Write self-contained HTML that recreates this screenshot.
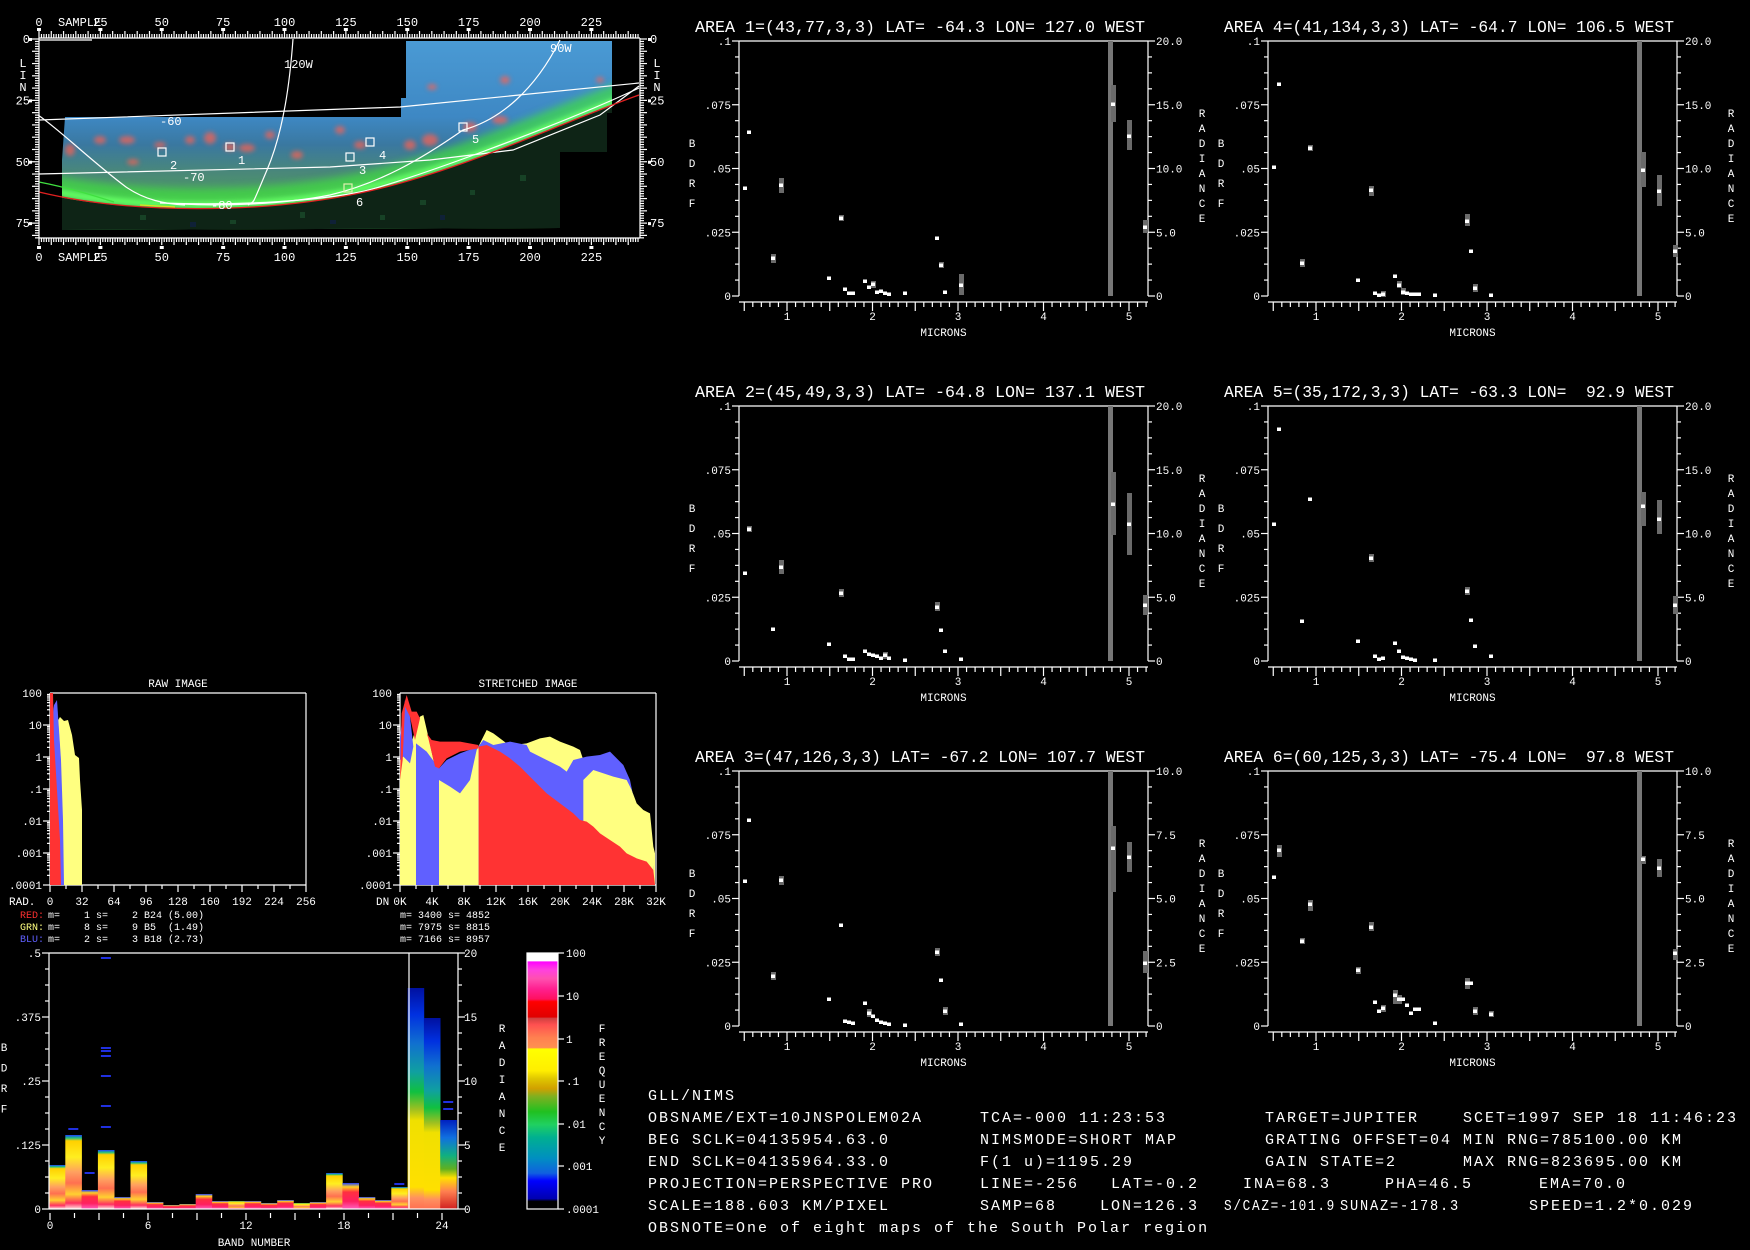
<!DOCTYPE html>
<html><head><meta charset="utf-8">
<style>
html,body{margin:0;padding:0;background:#000;}
svg{display:block}
text{font-family:"Liberation Mono","DejaVu Sans Mono",monospace;fill:#fff}
</style></head>
<body>
<svg id="s" xmlns="http://www.w3.org/2000/svg" width="1750" height="1250" viewBox="0 0 1750 1250">
<defs>
<filter id="bl" x="-20%" y="-50%" width="140%" height="200%"><feGaussianBlur stdDeviation="4"/></filter>
<filter id="bl2" x="-50%" y="-50%" width="200%" height="200%"><feGaussianBlur stdDeviation="2.5"/></filter>
<clipPath id="fp"><polygon points="65,117 401,117 401,98 406,98 406,41 612,41 612,113 607,113 607,152 560,152 560,228 62,230 62,160"/></clipPath>
<linearGradient id="mapg" x1="0" y1="41" x2="0" y2="230" gradientUnits="userSpaceOnUse">
<stop offset="0" stop-color="#4a9ad4"/><stop offset="0.4" stop-color="#3e88c4"/><stop offset="0.55" stop-color="#3a78a0"/><stop offset="0.7" stop-color="#4a8878"/><stop offset="0.85" stop-color="#50a060"/><stop offset="1" stop-color="#40c050"/></linearGradient>
<linearGradient id="gA" x1="0" y1="0" x2="0" y2="1">
<stop offset="0" stop-color="#2040ff"/><stop offset="0.04" stop-color="#20c080"/><stop offset="0.08" stop-color="#ffd000"/><stop offset="0.3" stop-color="#ffee20"/><stop offset="0.5" stop-color="#ffa060"/><stop offset="0.65" stop-color="#ff7050"/><stop offset="0.8" stop-color="#ffd030"/><stop offset="0.92" stop-color="#ff3060"/><stop offset="1" stop-color="#ffe0e0"/></linearGradient>
<linearGradient id="gB" x1="0" y1="0" x2="0" y2="1">
<stop offset="0" stop-color="#2040ff"/><stop offset="0.15" stop-color="#ffd020"/><stop offset="0.35" stop-color="#ff3040"/><stop offset="0.7" stop-color="#ff2060"/><stop offset="1" stop-color="#ff60c0"/></linearGradient>
<linearGradient id="gC" x1="0" y1="0" x2="0" y2="1">
<stop offset="0" stop-color="#0010a0"/><stop offset="0.12" stop-color="#0030e0"/><stop offset="0.25" stop-color="#1070d0"/><stop offset="0.38" stop-color="#10a0a0"/><stop offset="0.47" stop-color="#10c040"/><stop offset="0.55" stop-color="#a0c020"/><stop offset="0.6" stop-color="#f0e000"/><stop offset="0.9" stop-color="#ffe000"/><stop offset="0.95" stop-color="#ff9060"/><stop offset="1" stop-color="#ff7050"/></linearGradient>
<linearGradient id="gD" x1="0" y1="0" x2="0" y2="1">
<stop offset="0" stop-color="#0020c0"/><stop offset="0.2" stop-color="#1070e0"/><stop offset="0.4" stop-color="#10b080"/><stop offset="0.55" stop-color="#60b020"/><stop offset="0.65" stop-color="#ffe000"/><stop offset="0.8" stop-color="#ff8050"/><stop offset="1" stop-color="#d02020"/></linearGradient>
<linearGradient id="cb" x1="0" y1="953" x2="0" y2="1209" gradientUnits="userSpaceOnUse">
<stop offset="0" stop-color="#fff"/><stop offset="0.032" stop-color="#fff"/><stop offset="0.033" stop-color="#ff00ff"/><stop offset="0.065" stop-color="#ff40e0"/><stop offset="0.1" stop-color="#ff50b0"/><stop offset="0.14" stop-color="#ff2090"/><stop offset="0.18" stop-color="#ff1060"/><stop offset="0.19" stop-color="#ff0000"/><stop offset="0.25" stop-color="#e00000"/><stop offset="0.255" stop-color="#d04040"/><stop offset="0.28" stop-color="#ff5050"/><stop offset="0.33" stop-color="#ff8050"/><stop offset="0.37" stop-color="#ff9050"/><stop offset="0.375" stop-color="#ffff00"/><stop offset="0.46" stop-color="#ffee00"/><stop offset="0.49" stop-color="#e0c800"/><stop offset="0.53" stop-color="#d0a000"/><stop offset="0.56" stop-color="#80b020"/><stop offset="0.62" stop-color="#20c020"/><stop offset="0.67" stop-color="#20d060"/><stop offset="0.72" stop-color="#00b090"/><stop offset="0.8" stop-color="#0090c0"/><stop offset="0.86" stop-color="#1060e0"/><stop offset="0.89" stop-color="#0000ff"/><stop offset="0.96" stop-color="#0000b0"/><stop offset="0.97" stop-color="#000000"/><stop offset="1" stop-color="#000000"/></linearGradient>
</defs>

<g clip-path="url(#fp)">
<rect x="60" y="40" width="560" height="195" fill="url(#mapg)"/>
<g filter="url(#bl2)" fill="#ff6050" opacity="0.7">
<ellipse cx="127" cy="140" rx="8" ry="4"/><ellipse cx="100" cy="140" rx="6" ry="4"/><ellipse cx="210" cy="138" rx="6" ry="6"/><ellipse cx="190" cy="140" rx="5" ry="4"/><ellipse cx="297" cy="155" rx="6" ry="4"/><ellipse cx="247" cy="148" rx="8" ry="4"/><ellipse cx="133" cy="162" rx="6" ry="3"/><ellipse cx="70" cy="150" rx="5" ry="6"/><ellipse cx="230" cy="147" rx="6" ry="4"/><ellipse cx="160" cy="145" rx="6" ry="3"/><ellipse cx="430" cy="140" rx="8" ry="6"/><ellipse cx="470" cy="127" rx="7" ry="5"/><ellipse cx="410" cy="145" rx="6" ry="5"/><ellipse cx="500" cy="120" rx="8" ry="4"/><ellipse cx="360" cy="145" rx="6" ry="4"/><ellipse cx="340" cy="130" rx="5" ry="4"/><ellipse cx="505" cy="80" rx="5" ry="4"/><ellipse cx="432" cy="87" rx="5" ry="3"/><ellipse cx="600" cy="80" rx="4" ry="3"/><ellipse cx="270" cy="135" rx="5" ry="4"/></g>
<path d="M39,180 C130,202 260,202 360,181 S560,111 642,83" stroke="#40e040" stroke-width="16" fill="none" filter="url(#bl)" opacity="0.7"/>
<path d="M39,188 C130,210 260,210 360,189 S560,119 642,91" stroke="#60ff60" stroke-width="7" fill="none" filter="url(#bl2)"/>
<path d="M39,193 C130,214 260,214 360,193 S560,123 642,95 L642,240 L39,240 Z" fill="#0e2416"/>
<g fill="#1a4a2a" opacity="0.8"><rect x="140" y="215" width="6" height="5"/><rect x="300" y="212" width="5" height="6"/><rect x="420" y="200" width="6" height="5"/><rect x="470" y="190" width="5" height="5"/><rect x="520" y="175" width="6" height="6"/><rect x="380" y="215" width="5" height="5"/><rect x="230" y="220" width="6" height="4"/></g>
<g fill="#102040" opacity="0.8"><rect x="190" y="222" width="6" height="5"/><rect x="440" y="215" width="5" height="5"/><rect x="330" y="220" width="6" height="4"/></g>
</g>
<g fill="none" stroke="#fff" stroke-width="1.2">
<polyline points="39,120 400,107 639,83"/>
<polyline points="39,174 330,167 430,160 513,150 600,115 639,86"/>
<path d="M160,203 C250,206 320,200 360,192 S560,125 639,88"/>
<path d="M293,39 C290,80 284,130 267,170 S255,200 248,205"/>
<path d="M560,40 C535,90 500,120 463,130 C420,160 380,183 330,195 C280,205 220,206 181,204"/>
<path d="M38,115 C60,130 90,160 126,187 C145,200 165,204 185,205"/>
<line x1="39" y1="40" x2="92" y2="40"/>
</g>
<path d="M39,192 C130,214 260,214 360,193 S560,123 639,95" stroke="#e02020" stroke-width="1.3" fill="none"/>
<path d="M39,182 C70,188 95,196 114,202" stroke="#40e040" stroke-width="1.3" fill="none"/>
<path d="M140,205 L175,207" stroke="#e0e020" stroke-width="1.3" fill="none"/>
<g fill="none" stroke="#fff" stroke-width="1.2">
<rect x="226" y="143" width="8" height="8"/><rect x="158" y="148" width="8" height="8"/><rect x="346" y="153" width="8" height="8"/><rect x="366" y="138" width="8" height="8"/><rect x="459" y="123" width="8" height="8"/><rect x="344" y="184" width="8" height="8" stroke="#e0f0b0"/></g>
<g font-size="12"><text x="238" y="164">1</text><text x="170" y="169">2</text><text x="359" y="174">3</text><text x="379" y="159">4</text><text x="472" y="143">5</text><text x="356" y="206">6</text>
<text x="284" y="68">120W</text><text x="550" y="52">90W</text><text x="160" y="125">-60</text><text x="183" y="181">-70</text><text x="211" y="209">-80</text></g>

<g id="gen"></g>

<g font-size="15" letter-spacing="2" style="white-space:pre">
<text x="648" y="1100">GLL/NIMS</text>
<text x="648" y="1122">OBSNAME/EXT=10JNSPOLEM02A</text><text x="980" y="1122">TCA=-000 11:23:53</text><text x="1265" y="1122">TARGET=JUPITER</text><text x="1463" y="1122">SCET=1997 SEP 18 11:46:23</text>
<text x="648" y="1144">BEG SCLK=04135954.63.0</text><text x="980" y="1144">NIMSMODE=SHORT MAP</text><text x="1265" y="1144">GRATING OFFSET=04</text><text x="1463" y="1144">MIN RNG=785100.00 KM</text>
<text x="648" y="1166">END SCLK=04135964.33.0</text><text x="980" y="1166">F(1 u)=1195.29</text><text x="1265" y="1166">GAIN STATE=2</text><text x="1463" y="1166">MAX RNG=823695.00 KM</text>
<text x="648" y="1188">PROJECTION=PERSPECTIVE PRO</text><text x="980" y="1188">LINE=-256</text><text x="1111" y="1188">LAT=-0.2</text><text x="1243" y="1188">INA=68.3</text><text x="1385" y="1188">PHA=46.5</text><text x="1539" y="1188">EMA=70.0</text>
<text x="648" y="1210">SCALE=188.603 KM/PIXEL</text><text x="980" y="1210">SAMP=68</text><text x="1100" y="1210">LON=126.3</text><text x="1224" y="1210" textLength="112" lengthAdjust="spacingAndGlyphs">S/CAZ=-101.9</text><text x="1340" y="1210" textLength="120" lengthAdjust="spacingAndGlyphs">SUNAZ=-178.3</text><text x="1529" y="1210">SPEED=1.2*0.029</text>
<text x="648" y="1232">OBSNOTE=One of eight maps of the South Polar region</text>
</g>
</svg>
<script>
var g=document.getElementById('gen'),h='';
function L(x1,y1,x2,y2,c){h+='<line x1="'+x1+'" y1="'+y1+'" x2="'+x2+'" y2="'+y2+'" stroke="'+(c||'#fff')+'" stroke-width="1.2"/>';}
function T(x,y,s,fs,a,c,tl){h+='<text x="'+x+'" y="'+y+'" font-size="'+(fs||11)+'"'+(a?' text-anchor="'+a+'"':'')+(c?' style="fill:'+c+'"':'')+(tl?' textLength="'+tl+'" lengthAdjust="spacingAndGlyphs"':'')+' xml:space="preserve">'+s+'</text>';}
function R(x,y,w,hh,c){h+='<rect x="'+x+'" y="'+y+'" width="'+w+'" height="'+hh+'" fill="'+c+'"/>';}
(function(){
 var x0=39,x1=640,y0=38,y1=238,ps=2.455;
 L(x0,y0,x1,y0);L(x0,y1,x1,y1);L(x0,y0,x0,y1);L(x1,y0,x1,y1);
 for(var i=0;i<=245;i++){var x=x0+i*ps;if(x>x1)break;var l=(i%5==0)?7:4;L(x,y0,x,y0-l);L(x,y1,x,y1+l);}
 for(var j=0;j<=81;j++){var y=y0+1+j*ps;if(y>y1)break;var l=(j%5==0)?7:4;L(x0,y,x0-l,y);L(x1,y,x1+l,y);}
 var lab=['0','25','50','75','100','125','150','175','200','225'];
 for(var k=0;k<lab.length;k++){var x=x0+k*25*ps;R(x-2,y0-10,4,3,'#fff');R(x-2,y1+8,4,3,'#fff');T(x,26,lab[k],12,'middle');T(x,261,lab[k],12,'middle');}
 T(58,26,'SAMPLE',12);T(58,261,'SAMPLE',12);
 var ll=['0','25','50','75'];for(var k=0;k<4;k++){var y=y0+1+k*25*ps;T(x0-9,y+4,ll[k],12,'end');T(x1+10,y+4,ll[k],12);R(x0-10,y-1,3,3,'#fff');R(x1+8,y-1,3,3,'#fff');}
 var w='LINE';for(var k=0;k<3;k++){T(23,67+k*12,w[k],12,'middle');T(657,67+k*12,w[k],12,'middle');}
})();
function P(x0,y0,rmax,title,pts){
 var W=409,H=255;
 T(x0-44,y0-9,title,16.6,null,null,450);
 L(x0,y0,x0+W,y0);L(x0,y0,x0,y0+H);L(x0+W,y0,x0+W,y0+H);
 for(var i=0;i<=16;i++){var y=y0+i*H/16,l=(i%4==0)?7:4;L(x0,y,x0-l,y);L(x0+W,y,x0+W+l,y);}
 var ll=['.1','.075','.05','.025','0'];
 var rl=rmax==20?['20.0','15.0','10.0','5.0','0']:['10.0','7.5','5.0','2.5','0'];
 for(var i=0;i<5;i++){var y=y0+i*H/4+4;T(x0-8,y,ll[i],11,'end');T(x0+W+8,y,rl[i],11);}
 var ya=y0+261;L(x0,ya,x0+W,ya);
 for(var m=5;m<=52;m++){var x=x0+48+(m/10-1)*85.5;var l=(m%5==0)?9:5;L(x,ya,x,ya+l);}
 for(var n=1;n<=5;n++){T(x0+48+(n-1)*85.5,y0+279,''+n,11,'middle');}
 T(x0+W/2,y0+295,'MICRONS',11,'middle');
 var b='BDRF';for(var k=0;k<4;k++)T(x0-47,y0+106+k*20,b[k],11,'middle');
 var r='RADIANCE';for(var k=0;k<8;k++)T(x0+W+54,y0+76+k*15,r[k],11,'middle');
 R(x0+369,y0,5,H,'#777');
 for(var k=0;k<pts.length;k++){var p=pts[k];
  if(p.length>2)R(x0+p[0]-2,y0+p[2],5,p[3]-p[2],'#6a6a6a');
  R(x0+p[0]-2,y0+p[1]-1.5,4,3.5,'#fff');}
}
P(739,41,20,'AREA 1=(43,77,3,3) LAT= -64.3 LON= 127.0 WEST',[[6,147],[10,91],[34,217,213,222],[42,144,137,152],[90,237],[102,177,174,180],[106,248],[110,252],[114,252],[126,240],[130,246],[134,243,240,247],[138,251],[142,250],[146,252],[150,253],[166,252],[198,197],[202,224,221,227],[206,251],[222,244,233,254],[374,63,44,81],[390,95,79,109],[406,186,179,192]]);
P(1268,41,20,'AREA 4=(41,134,3,3) LAT= -64.7 LON= 106.5 WEST',[[6,126],[11,43],[34,222,218,226],[42,107,104,110],[90,239],[103,149,145,155],[107,252],[111,254],[115,253,250,256],[127,235],[131,244,240,247],[135,251,247,254],[139,252],[143,253],[147,253],[151,253],[167,254],[199,180,173,185],[203,210],[207,247,243,251],[223,254],[375,129,111,146],[391,150,134,165],[407,210,204,216]]);
P(739,406,20,'AREA 2=(45,49,3,3) LAT= -64.8 LON= 137.1 WEST',[[6,167],[10,123,120,126],[34,223],[42,161,154,168],[90,238],[102,187,183,191],[106,250],[110,253],[114,253],[126,245],[130,248],[134,249],[138,250],[142,252],[146,249,246,253],[150,252],[166,254],[198,201,196,205],[202,224],[206,245],[222,253],[374,98,66,129],[390,118,87,149],[406,199,189,209]]);
P(1268,406,20,'AREA 5=(35,172,3,3) LAT= -63.3 LON=  92.9 WEST',[[11,23],[6,118],[34,215],[42,93],[90,235],[103,152,148,156],[107,250],[111,253],[115,252],[127,237],[131,245],[135,251],[139,252],[143,253],[147,254],[167,254],[199,185,181,189],[203,214],[207,240],[223,250],[375,100,86,120],[391,113,94,128],[407,199,190,208]]);
P(739,771,10,'AREA 3=(47,126,3,3) LAT= -67.2 LON= 107.7 WEST',[[6,110],[10,49],[34,205,201,209],[42,109,105,114],[90,228],[102,154],[106,250],[110,251],[114,252],[126,232],[130,242,238,246],[134,245],[138,249],[142,251],[146,252],[150,253],[166,254],[198,181,177,185],[202,209],[206,240,236,244],[222,253],[374,77,55,121],[390,86,71,101],[406,192,180,202]]);
P(1268,771,10,'AREA 6=(60,125,3,3) LAT= -75.4 LON=  97.8 WEST',[[6,106],[11,79,74,86],[34,170,167,173],[42,133,129,140],[90,199,196,203],[103,156,151,160],[107,231],[111,240],[115,237,234,241],[127,224,219,233],[131,228,224,233],[135,228],[139,234],[143,242],[147,238],[151,238],[167,252],[199,212,207,218],[203,212],[207,240,236,244],[223,243,240,246],[375,88,85,93],[391,97,88,106],[407,182,178,189]]);
function HX(x0,lab,title,axlab){
 var y0=693,y1=885,W=256;
 L(x0,y0,x0+W,y0);L(x0+W,y0,x0+W,y1);L(x0,y0,x0,y1);L(x0,y1,x0+W,y1);
 T(x0+W/2,687,title,11,'middle');
 var yl=['100','10','1','.1','.01','.001','.0001'];
 for(var d=0;d<6;d++){for(var k=1;k<10;k++){var y=y0+d*32+32-Math.log10(k)*32;var l=k==1?7:3;L(x0,y,x0-l,y);}}
 for(var d=0;d<7;d++)T(x0-8,y0+d*32+4,yl[d],11,'end');
 for(var i=0;i<=16;i++){var x=x0+i*16;L(x,y1,x,y1+(i%2==0?7:4));}
 for(var i=0;i<=8;i++)T(x0+i*32,905,lab[i],11,'middle');
 T(x0-(axlab=='DN'?24:41),905,axlab,11);
}
HX(50,['0','32','64','96','128','160','192','224','256'],'RAW IMAGE','RAD.');
HX(400,['0K','4K','8K','12K','16K','20K','24K','28K','32K'],'STRETCHED IMAGE','DN');
h+='<polygon fill="#ffff80" points="53,885 53,730 57,722 60,717 64,721 68,720 72,735 75,755 79,758 80,780 82,810 82,885"/>';
h+='<polygon fill="#6060ff" points="52,885 52,720 54,705 57,700 58,715 61,760 63,820 64,885"/>';
h+='<polygon fill="#ff3333" points="50,885 50,693 53,693 54,740 57,790 60,840 61,885"/>';
h+='<g transform="translate(360,680) scale(0.33333)">';
h+='<polygon fill="#ffff80" points="120,615 120,160 140,240 160,170 180,110 190,105 205,170 225,260 240,300 270,320 300,340 330,300 350,210 380,150 400,160 440,190 460,195 500,190 540,175 570,170 600,185 640,200 660,210 670,240 700,260 760,280 800,300 815,330 830,370 850,390 870,400 880,500 885,520 885,615"/>';
h+='<polygon fill="#6060ff" points="168,615 168,190 200,215 237,265 260,240 300,220 340,205 355,200 370,180 400,195 450,185 500,195 510,215 560,240 600,260 620,275 640,240 680,230 720,225 750,215 790,255 810,300 830,400 860,490 880,560 880,615"/>';
h+='<polygon fill="#6060ff" points="120,240 120,170 135,60 150,110 160,200 150,250 130,230"/>';
h+='<polygon fill="#ffff80" points="237,615 237,300 270,320 300,340 330,300 350,210 356,200 356,615"/>';
h+='<polygon fill="#ffff80" points="670,615 670,300 700,270 760,290 800,300 815,330 830,380 850,400 870,420 880,520 880,615"/>';
h+='<polygon fill="#ff3333" points="356,615 356,200 380,195 420,215 450,235 480,260 500,280 530,310 560,340 600,370 640,400 660,420 680,425 700,440 720,460 750,480 780,500 800,520 830,535 860,545 880,570 885,615"/>';
h+='<polygon fill="#ff3333" points="200,160 215,180 240,185 300,185 355,195 355,205 300,215 260,235 237,265 225,260 205,175"/>';
h+='<polygon fill="#ff3333" points="120,300 125,100 140,45 155,95 170,95 180,115 165,180 150,110 135,80 128,240"/>';
h+='</g>';
T(20,918,'RED:',10,null,'#ff3030');T(20,930,'GRN:',10,null,'#ffff80');T(20,942,'BLU:',10,null,'#6060ff');
T(48,918,'m=    1 s=    2 B24 (5.00)',10);T(48,930,'m=    8 s=    9 B5  (1.49)',10);T(48,942,'m=    2 s=    3 B18 (2.73)',10);
T(400,918,'m= 3400 s= 4852',10);T(400,930,'m= 7975 s= 8815',10);T(400,942,'m= 7166 s= 8957',10);
(function(){
 var x0=49,x1=458,y0=953,y1=1209,bw=16.3;
 var tops=[1165,1135,1190,1150,1197,1161,1202,1205,1204,1194,1201,1201,1201,1203,1200,1203,1202,1173,1183,1197,1200,1187,988,1018,1120];
 var gr=['gA','gA','gB','gA','gB','gA','gB','gB','gB','gB','gB','gA','gB','gB','gB','gA','gB','gA','gB','gB','gB','gA','gC','gC','gD'];
 for(var i=0;i<25;i++){R(x0+i*bw,tops[i],bw+0.3,y1-tops[i],'url(#'+gr[i]+')');}
 var bl=[[3,957],[3,1047],[3,1050],[3,1055],[3,1075],[3,1105],[3,1126],[1,1128],[2,1172],[21,1183],[24,1101],[24,1108]];
 for(var k=0;k<bl.length;k++){var b=bl[k];R(x0+b[0]*bw+3,b[1],10,2,'#2030e0');}
 L(x0,y0,x1,y0);L(x0,y0,x0,y1);L(x1,y0,x1,y1);L(409,y0,409,y1);L(x0,y1,x1,y1);
 for(var i=0;i<=16;i++){var y=y0+i*16,l=(i%4==0)?7:4;L(x0,y,x0-l,y);L(x1,y,x1+l,y);}
 var ll=['.5','.375','.25','.125','0'],rl=['20','15','10','5','0'];
 for(var i=0;i<5;i++){T(x0-8,y0+i*64+4,ll[i],11,'end');T(x1+6,y0+i*64+4,rl[i],11);}
 var ya=y1+4;for(var i=0;i<=16;i++){var x=x0+1+i*24.5;L(x,ya,x,ya+(i%2==0?7:5));}
 var xl=['0','6','12','18','24'];for(var i=0;i<5;i++)T(x0+1+i*98,1229,xl[i],11,'middle');
 T(254,1246,'BAND NUMBER',11,'middle');
 var b='BDRF';for(var k=0;k<4;k++)T(4,1051+k*20.5,b[k],11,'middle');
 var r='RADIANCE';for(var k=0;k<8;k++)T(502,1032+k*17,r[k],11,'middle');
 var f='FREQUENCY';for(var k=0;k<9;k++)T(602,1032+k*14,f[k],11,'middle');
 R(527,953,31,256,'url(#cb)');
 h+='<rect x="527" y="953" width="31" height="256" fill="none" stroke="#fff" stroke-width="1.2"/>';
 var cl=['100','10','1','.1','.01','.001','.0001'],cy=[953,996,1039,1081,1124,1166,1209];
 for(var i=0;i<7;i++){L(558,cy[i],564,cy[i]);T(566,cy[i]+4,cl[i],11);}
})();
g.innerHTML=h;
</script>
</body></html>
